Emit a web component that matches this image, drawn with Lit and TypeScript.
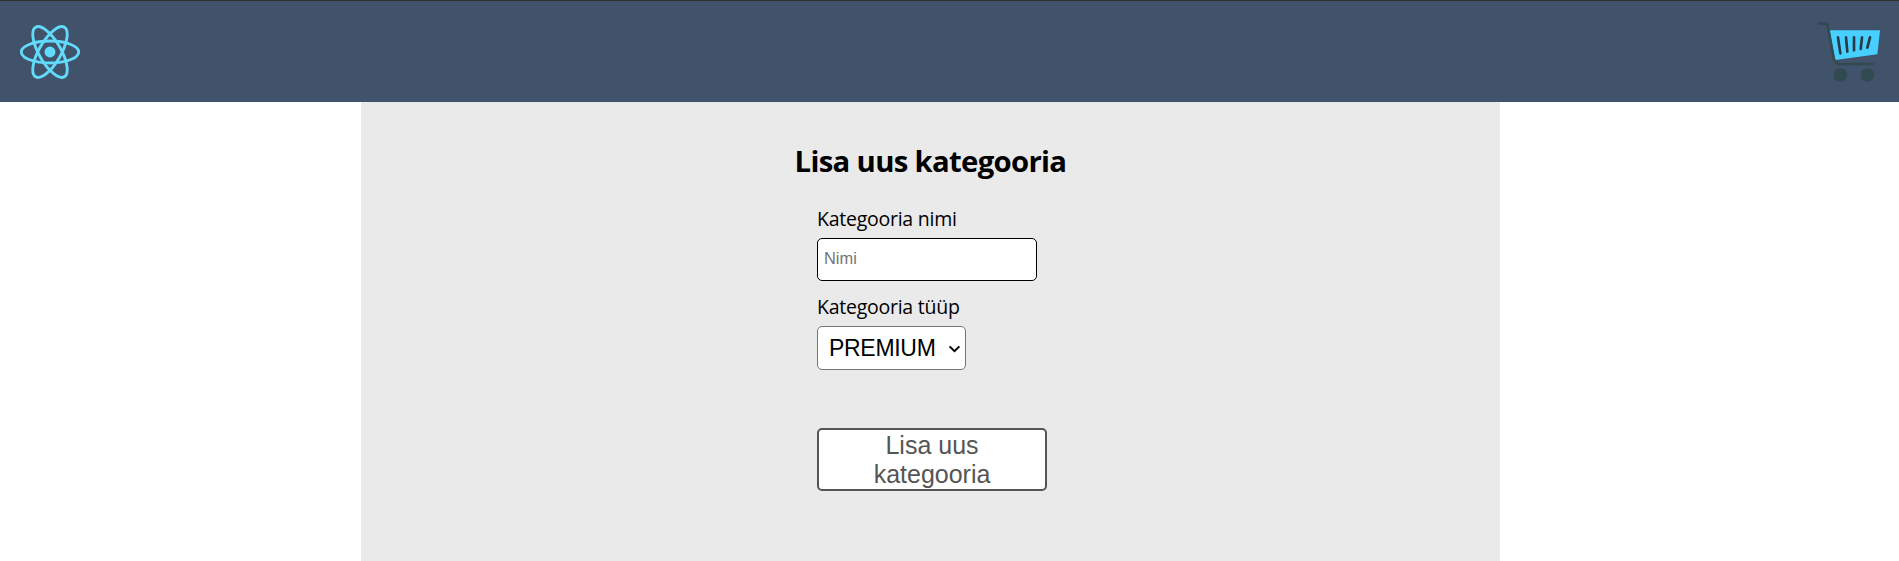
import { LitElement, html, css } from "lit";
import { customElement } from "lit/decorators.js";

@customElement("app-header")
class AppHeader extends LitElement {
  static styles = css`
    :host { display: block; }
    .bar {
      box-sizing: border-box;
      height: 102px;
      background: #41536a;
      border-top: 1px solid #30302e;
      display: flex;
      justify-content: space-between;
      align-items: flex-start;
      padding: 0 18px 0 20px;
    }
    .logo { display: block; width: 60px; height: 54px; margin-top: 24px; }
    .cart { display: block; width: 64px; height: 62px; margin-top: 20px; }
  `;
  render() {
    return html`<header class="bar">
      <svg class="logo" viewBox="-11.5 -10.35 23 20.7">
        <circle r="2.1" fill="#61dafb" />
        <g fill="none" stroke="#61dafb" stroke-width="1.1">
          <ellipse rx="11" ry="4.2" />
          <ellipse rx="11" ry="4.2" transform="rotate(60)" />
          <ellipse rx="11" ry="4.2" transform="rotate(120)" />
        </g>
      </svg>
      <svg class="cart" viewBox="82 63 192 186">
        <path d="M119 91H271L263 163L137 180Z" fill="#46cfff" />
        <g fill="none" stroke="#314a52" stroke-width="8" stroke-linecap="round" stroke-linejoin="round">
          <path d="M87 71H113L132 175Q136 191 151 192H251" />
          <path d="M145 112L152 160M169 112L173 155M193 112V151M217 112L213 147M241 112L233 143" stroke="#263b45" />
        </g>
        <circle cx="152" cy="225" r="20.5" fill="#314a52" />
        <circle cx="233" cy="225" r="20.5" fill="#314a52" />
      </svg>
    </header>`;
  }
}

@customElement("category-form")
class CategoryForm extends LitElement {
  static styles = css`
    :host { display: block; }
    .panel {
      box-sizing: border-box;
      width: 1139px;
      height: 459px;
      margin-left: 361px;
      padding-top: 39px;
      background: #eaeaea;
      color: #000;
      font-family: "Open Sans", "Noto Sans", sans-serif;
    }
    .title {
      margin: 0;
      font-size: 29.3px;
      line-height: 40px;
      font-weight: 700;
      letter-spacing: -0.68px;
      text-align: center;
      white-space: nowrap;
    }
    .form {
      display: flex;
      flex-direction: column;
      align-items: flex-start;
      margin: 25px 0 0 456px;
    }
    .label {
      font-size: 19.5px;
      line-height: 26px;
      height: 32px;
      letter-spacing: -0.25px;
    }
    .name, .type, .submit {
      box-sizing: border-box;
      margin: 0;
      background: #fff;
      border-radius: 5px;
      font-family: "Liberation Sans", Arial, sans-serif;
    }
    .name {
      width: 220px;
      height: 43px;
      border: 1px solid #000;
      padding: 0 6px 3px;
      font-size: 16.4px;
      margin-bottom: 13px;
    }
    .name::placeholder { color: #757575; }
    .picker {
      display: grid;
      align-items: center;
      margin-bottom: 58px;
    }
    .type {
      grid-area: 1 / 1;
      appearance: none;
      width: 149px;
      height: 44px;
      border: 1px solid #767676;
      padding: 0 0 0 11px;
      font-size: 23px;
      letter-spacing: -0.3px;
      color: #000;
    }
    .chevron {
      grid-area: 1 / 1;
      justify-self: end;
      width: 13px;
      height: 8px;
      margin: 2px 5px 0 0;
      pointer-events: none;
    }
    .submit {
      width: 230px;
      height: 63px;
      border: 2px solid #555;
      padding: 0 40px;
      font-size: 25px;
      line-height: 29px;
      color: #555;
    }
  `;
  render() {
    return html`<main class="panel">
      <h1 class="title">Lisa uus kategooria</h1>
      <div class="form">
        <label class="label" for="name">Kategooria nimi</label>
        <input class="name" id="name" placeholder="Nimi" />
        <label class="label" for="type">Kategooria tüüp</label>
        <div class="picker">
          <select class="type" id="type"><option>PREMIUM</option></select>
          <svg class="chevron" viewBox="0 0 13 8">
            <path d="M1.6 1.4L6.5 6.2L11.4 1.4" fill="none" stroke="#000" stroke-width="2" />
          </svg>
        </div>
        <button class="submit">Lisa uus kategooria</button>
      </div>
    </main>`;
  }
}

@customElement("app-root")
class AppRoot extends LitElement {
  static styles = css`
    :host { display: block; height: 561px; overflow: hidden; background: #fff; }
  `;
  render() {
    return html`<app-header></app-header><category-form></category-form>`;
  }
}
